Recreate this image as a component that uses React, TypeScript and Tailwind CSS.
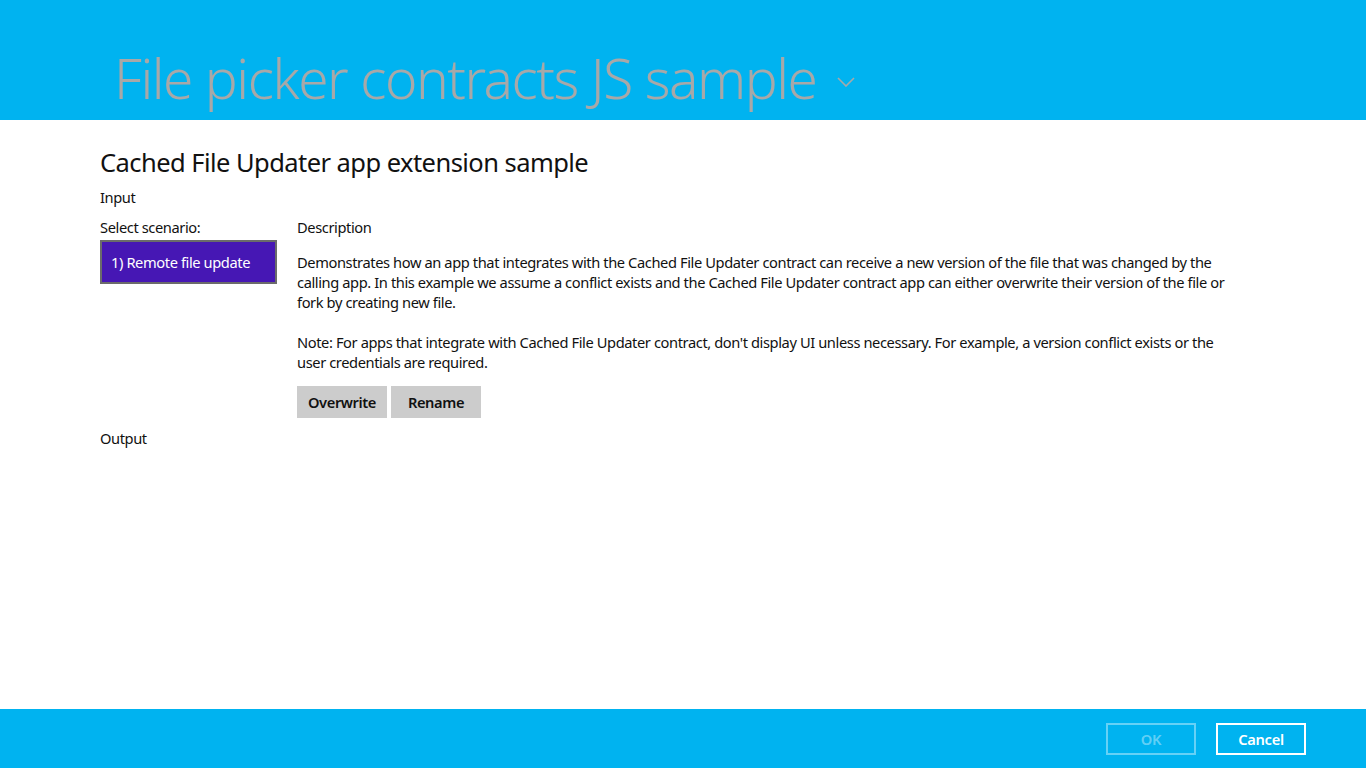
import React from "react";

export default function App() {
  const font = { fontFamily: '"Noto Sans", "Open Sans", sans-serif' };
  return (
    <div className="w-[1366px] h-[768px] flex flex-col bg-white overflow-hidden" style={font}>
      <header className="h-[120px] shrink-0 bg-[#00b3f0] flex items-end pl-[114px] pb-[10px]">
        <div className="flex items-center">
          <span className="text-[55px] leading-[64px] font-light text-[#a8a8a8] tracking-[-1.45px]">
            File picker contracts JS sample
          </span>
          <svg className="ml-[20px] mt-[8px]" width="18" height="10" viewBox="0 0 18 10">
            <path d="M1 1 L9 9 L17 1" fill="none" stroke="#a8a8a8" strokeWidth="1.6" />
          </svg>
        </div>
      </header>
      <main className="flex-1 pl-[100px] pt-[26px] text-[#111] text-[14.67px] leading-[20px] tracking-[-0.4px]">
        <h1 className="text-[25.5px] leading-[32px] font-normal text-[#111] tracking-[-0.55px]">
          Cached File Updater app extension sample
        </h1>
        <div className="mt-[9px]">Input</div>
        <div className="flex mt-[10px]">
          <div className="w-[197px] shrink-0">
            <div>Select scenario:</div>
            <div className="mt-[3px] w-[177px] h-[44px] bg-[#4617b4] border-2 border-[#6b6b6b] text-white flex items-center pl-[9px]">
              1) Remote file update
            </div>
          </div>
          <div className="w-[940px]">
            <div>Description</div>
            <p className="mt-[15px]">
              Demonstrates how an app that integrates with the Cached File Updater contract can receive a new version of the file that was changed by the calling app. In this example we assume a conflict exists and the Cached File Updater contract app can either overwrite their version of the file or fork by creating new file.
            </p>
            <p className="mt-[20px]">
              Note: For apps that integrate with Cached File Updater contract, don't display UI unless necessary. For example, a version conflict exists or the user credentials are required.
            </p>
            <div className="flex gap-[4px] mt-[14px]">
              <button className="w-[90px] h-[32px] bg-[#cccccc] font-semibold text-[#111]">Overwrite</button>
              <button className="w-[90px] h-[32px] bg-[#cccccc] font-semibold text-[#111]">Rename</button>
            </div>
          </div>
        </div>
        <div className="mt-[10px]">Output</div>
      </main>
      <footer className="h-[59px] shrink-0 bg-[#00b3f0] flex items-center justify-end pr-[60px] gap-[20px] text-[14.67px] tracking-[-0.3px]">
        <button className="w-[90px] h-[32px] border-2 border-white/40 text-white/40 font-semibold">OK</button>
        <button className="w-[90px] h-[32px] border-2 border-white text-white font-semibold">Cancel</button>
      </footer>
    </div>
  );
}
